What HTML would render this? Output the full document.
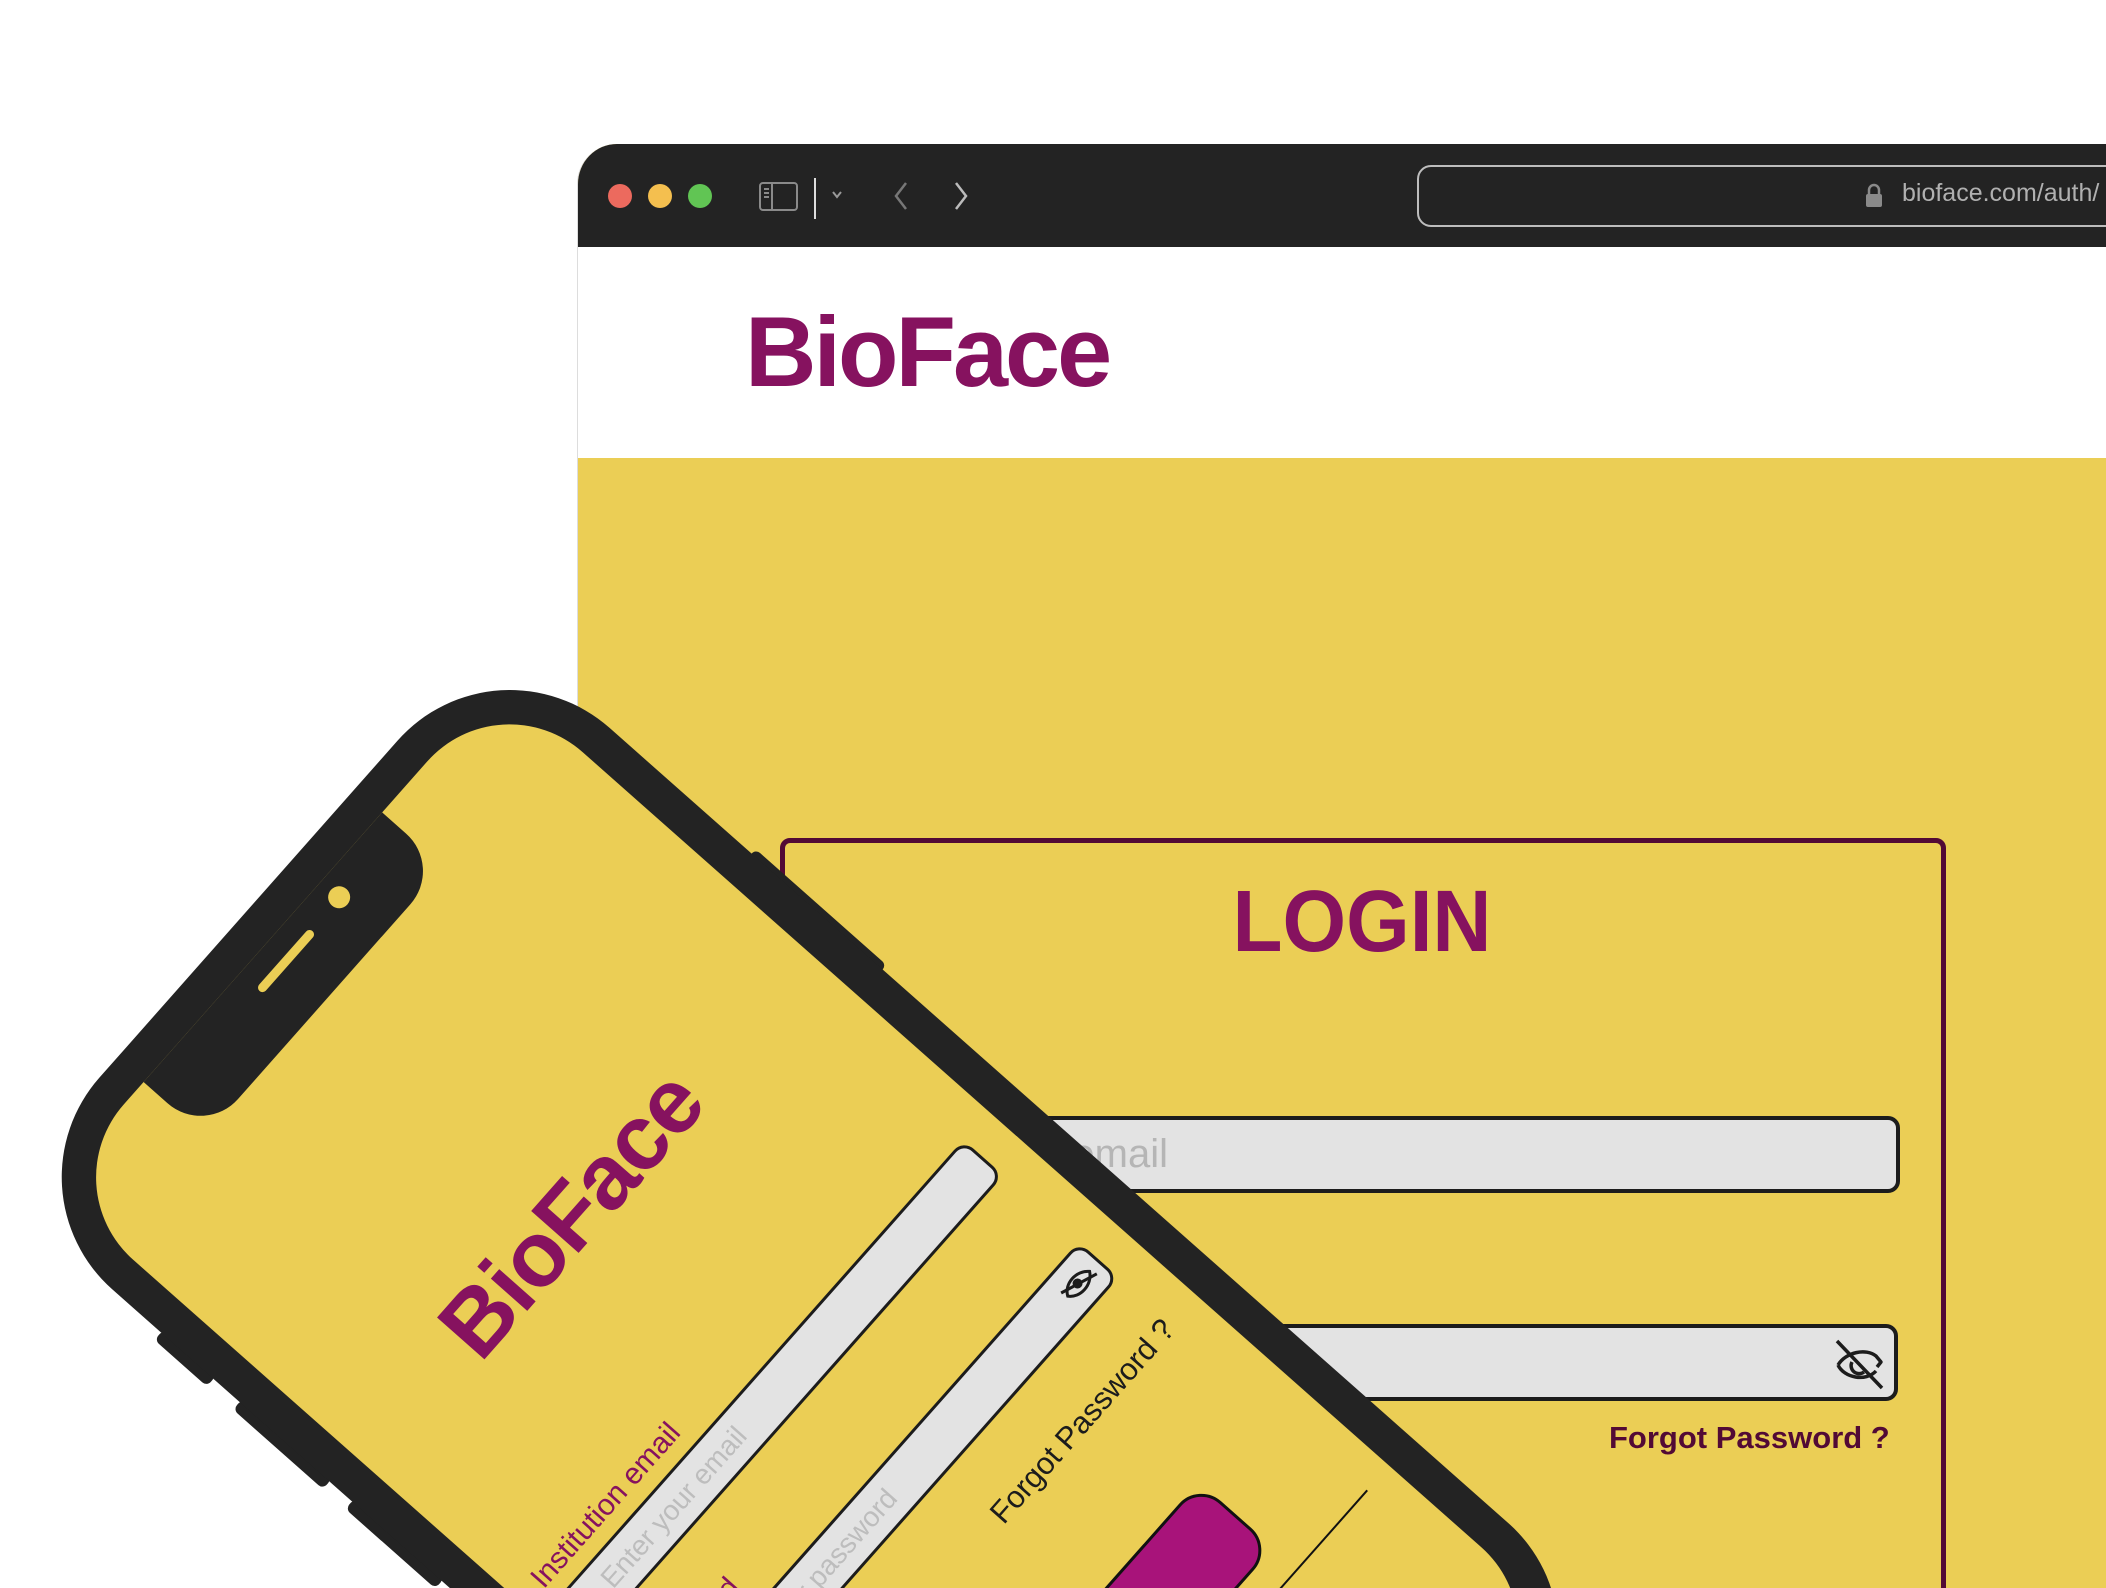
<!DOCTYPE html>
<html><head><meta charset="utf-8"><style>
*{margin:0;padding:0;box-sizing:border-box}
html,body{width:2106px;height:1588px;overflow:hidden;background:#fff;position:relative;font-family:"Liberation Sans",sans-serif}
.abs{position:absolute}
</style></head><body>
<div class="abs" style="left:577px;top:144px;width:1560px;height:1444px;border-top-left-radius:40px;overflow:hidden;background:#ebce55;border-left:1px solid #ddd">
  <div class="abs" style="left:0;top:0;width:100%;height:103px;background:#232323"></div>
  <div class="abs" style="left:0;top:103px;width:100%;height:211px;background:#fff"></div>
</div>
<div class="abs" style="left:608px;top:184px;width:24px;height:24px;border-radius:50%;background:#ec6a5e"></div>
<div class="abs" style="left:648px;top:184px;width:24px;height:24px;border-radius:50%;background:#f4bf4f"></div>
<div class="abs" style="left:688px;top:184px;width:24px;height:24px;border-radius:50%;background:#61c554"></div>
<svg class="abs" style="left:755px;top:178px" width="100" height="46" viewBox="0 0 100 46">
 <rect x="5" y="5" width="37" height="27" rx="3" fill="none" stroke="#8a8a8a" stroke-width="2"/>
 <line x1="17" y1="5" x2="17" y2="32" stroke="#8a8a8a" stroke-width="2"/>
 <line x1="9" y1="11" x2="14" y2="11" stroke="#8a8a8a" stroke-width="2"/>
 <line x1="9" y1="15" x2="14" y2="15" stroke="#8a8a8a" stroke-width="2"/>
 <line x1="9" y1="19" x2="14" y2="19" stroke="#8a8a8a" stroke-width="2"/>
 <line x1="60" y1="-3" x2="60" y2="41" stroke="#ddd" stroke-width="2"/>
 <polyline points="78,14 82,19 86,14" fill="none" stroke="#999" stroke-width="2"/>
</svg>
<svg class="abs" style="left:885px;top:178px" width="100" height="40" viewBox="0 0 100 40">
 <polyline points="21,5 11,18 21,31" fill="none" stroke="#777" stroke-width="2.5"/>
 <polyline points="71,5 81,18 71,31" fill="none" stroke="#bbb" stroke-width="2.5"/>
</svg>
<div class="abs" style="left:1417px;top:165px;width:760px;height:62px;border:2px solid #bdbdbd;border-radius:14px;background:#232323"></div>
<svg class="abs" style="left:1864px;top:183px" width="20" height="26" viewBox="0 0 20 26"><path d="M5 11V7a5 5 0 0 1 10 0v4" fill="none" stroke="#8a8a8a" stroke-width="2.5"/><rect x="2" y="11" width="16" height="13" rx="2" fill="#8a8a8a"/></svg>
<div class="abs" style="left:1902px;top:179px;font-size:25px;color:#b0b0b0;white-space:nowrap">bioface.com/auth/</div>
<div class="abs" style="left:745px;top:302px;font-size:99px;font-weight:bold;color:#86125f;letter-spacing:-3px;line-height:1">BioFace</div>
<div class="abs" style="left:780px;top:838px;width:1166px;height:800px;border:5px solid #520a35;border-radius:10px"></div>
<div class="abs" style="left:1180px;top:878px;width:364px;text-align:center;font-size:87px;font-weight:900;color:#86125f;line-height:1;transform:scaleX(0.94)">LOGIN</div>
<div class="abs" style="left:860px;top:1116px;width:1040px;height:77px;background:#e3e3e3;border:4px solid #1c1c1c;border-radius:12px;overflow:hidden">
 <div class="abs" style="right:728px;top:12px;font-size:40px;color:#b5b5b5;white-space:nowrap">Enter your email</div>
</div>
<div class="abs" style="left:860px;top:1324px;width:1038px;height:77px;background:#e3e3e3;border:4px solid #1c1c1c;border-radius:12px"></div>
<svg class="abs" style="left:1832px;top:1338px" width="54" height="54" viewBox="0 0 54 54">
 <path d="M6 27 C14 14 34 10 44 18 L49 24 L45 29" fill="none" stroke="#1c1c1c" stroke-width="3.5" stroke-linejoin="round"/>
 <path d="M6 27 C12 40 34 44 44 33" fill="none" stroke="#1c1c1c" stroke-width="3.5"/>
 <path d="M20 24 a8 8 0 0 0 12 10" fill="none" stroke="#1c1c1c" stroke-width="3.5"/>
 <line x1="5" y1="3" x2="50" y2="50" stroke="#1c1c1c" stroke-width="3.5"/>
</svg>
<div class="abs" style="left:1609px;top:1420px;font-size:31px;font-weight:bold;color:#520a35;white-space:nowrap">Forgot Password ?</div>

<div class="abs" style="left:0px;top:1190px;width:750px;height:1500px;transform-origin:0 0;transform:rotate(-48.5deg)">
 <div class="abs" style="left:742px;top:340px;width:14px;height:175px;background:#232323;border-radius:6px"></div>
 <div class="abs" style="left:-10px;top:215px;width:14px;height:70px;background:#232323;border-radius:6px"></div>
 <div class="abs" style="left:-10px;top:320px;width:14px;height:120px;background:#232323;border-radius:6px"></div>
 <div class="abs" style="left:-10px;top:470px;width:14px;height:120px;background:#232323;border-radius:6px"></div>
 <div class="abs" style="left:0;top:0;width:750px;height:1500px;background:#232323;border-radius:150px"></div>
 <div class="abs" style="left:36px;top:36px;width:678px;height:1420px;background:#ebce55;border-radius:110px;overflow:hidden">
  <div class="abs" style="left:140px;top:-10px;width:360px;height:92px;background:#232323;border-radius:0 0 50px 50px"></div>
  <div class="abs" style="left:285px;top:22px;width:80px;height:9px;background:#ebce55;border-radius:5px"></div>
  <div class="abs" style="left:397px;top:13px;width:22px;height:22px;background:#ebce55;border-radius:50%"></div>
  <div class="abs" style="left:152px;top:362px;font-size:92px;font-weight:bold;color:#86125f;letter-spacing:-2px;line-height:1;white-space:nowrap">BioFace</div>
  <div class="abs" style="left:25px;top:610px;font-size:30px;color:#86125f;white-space:nowrap">Institution email</div>
  <div class="abs" style="left:14px;top:652px;width:626px;height:54px;background:#e3e3e3;border:3px solid #1c1c1c;border-radius:14px">
   <div class="abs" style="left:54px;top:8px;font-size:28px;color:#bdbdbd;white-space:nowrap">Enter your email</div>
  </div>
  <div class="abs" style="left:25px;top:757px;font-size:30px;color:#86125f;white-space:nowrap">Password</div>
  <div class="abs" style="left:14px;top:806px;width:626px;height:54px;background:#e3e3e3;border:3px solid #1c1c1c;border-radius:14px">
   <div class="abs" style="left:54px;top:8px;font-size:28px;color:#bdbdbd;white-space:nowrap">Enter your password</div>
   <svg class="abs" style="left:570px;top:6px" width="44" height="38" viewBox="0 0 44 38"><path d="M5 19 C12 8 30 8 38 19 C30 30 12 30 5 19Z" fill="none" stroke="#1c1c1c" stroke-width="3"/><circle cx="21" cy="18" r="5" fill="#1c1c1c"/><line x1="3" y1="12" x2="41" y2="26" stroke="#1c1c1c" stroke-width="3"/></svg>
  </div>
  <div class="abs" style="left:378px;top:910px;font-size:31px;color:#1c1c1c;white-space:nowrap">Forgot Password ?</div>
  <div class="abs" style="left:150px;top:1055px;width:390px;height:100px;background:#a8137a;border:3px solid #111;border-radius:30px"></div>
  <div class="abs" style="left:380px;top:1186px;width:265px;height:2px;background:#111"></div>
 </div>
</div>
</body></html>
